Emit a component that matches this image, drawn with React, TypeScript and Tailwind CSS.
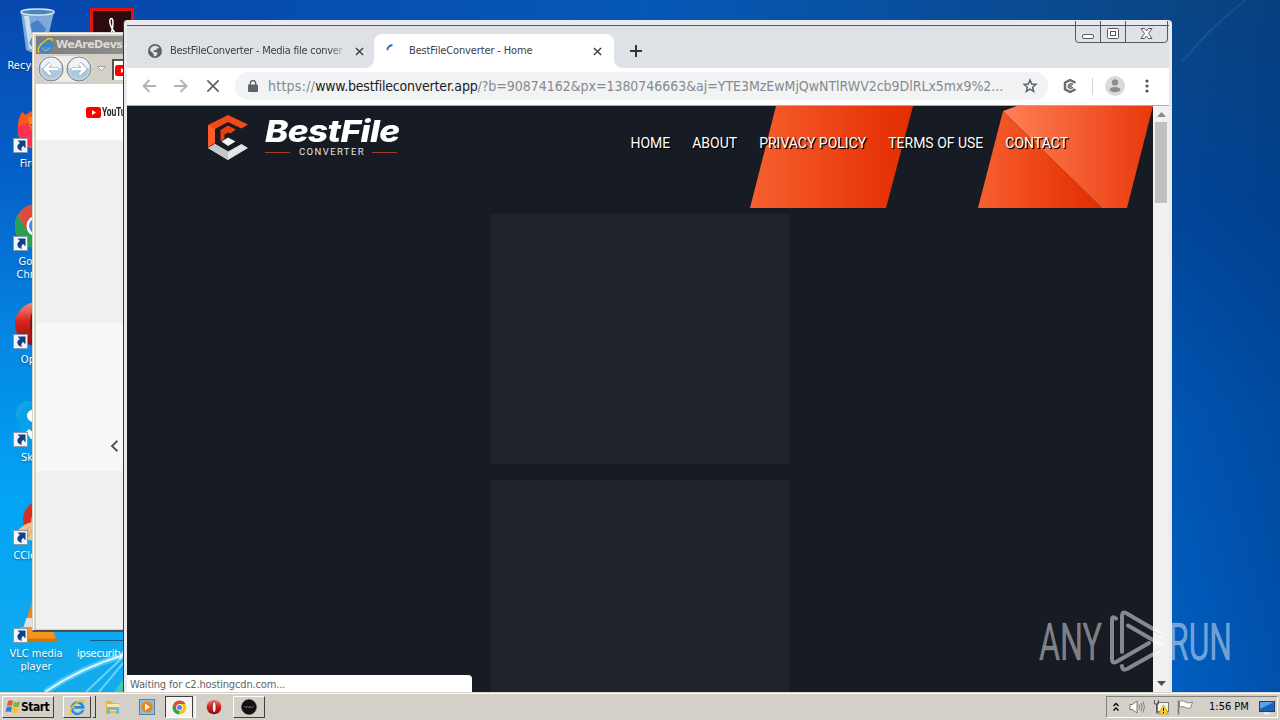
import type { ReactNode } from "react";
import { clsx } from "clsx";

const UI_FONT = "font-['DejaVu_Sans_Condensed','DejaVu_Sans',sans-serif]";

// Little blue "shortcut" arrow in the lower left corner of a desktop icon.
function ShortcutArrow() {
  return (
    <svg className="absolute -left-px top-[34px] h-[15px] w-[15px]" viewBox="0 0 15 15">
      <rect x=".5" y=".5" width="14" height="14" fill="#f2f6fa" stroke="#8b97a6" />
      <path d="M4.500 2.500h8v8L10.300 8C8.500 8.800 8 10.500 8.800 13 3.500 11.500 3 7 7 5z" fill="#153f80" />
    </svg>
  );
}

function RecycleBinIcon() {
  return (
    <svg className="h-12 w-12" viewBox="0 0 48 48">
      <path d="M9 6l5 38q9 5 19 0l9-38z" fill="#a9c8e4" fillOpacity=".75" />
      <path d="M12 10l5 33h5L17 10z" fill="#e3eff9" fillOpacity=".75" />
      <path d="M18 18l8-4 8 9-4 9 3 8-10 5-6-8 4-8z" fill="#2f71c4" fillOpacity=".7" />
      <ellipse cx="25.500" cy="6" rx="16.500" ry="3" fill="#4d85be" stroke="#d7e5f0" strokeWidth="1.500" />
    </svg>
  );
}

function FirefoxIcon() {
  return (
    <svg className="h-12 w-12" viewBox="0 0 48 48">
      <path d="M6 22q0-7 4-14l4 3 5-4 4 6 17 1v30H18C8 40 5 32 6 22z" fill="#fb5a1b" />
      <path d="M6 22c0 14 6 21 20 22V30c-8-1-10-6-7-12z" fill="#ff2e55" />
      <path d="M16 14c4-2 7-2 10 0v7l-8 2z" fill="#ff8a16" />
      <path d="M18 21l5-2v4z" fill="#6a1b4d" />
    </svg>
  );
}

function ChromeIcon({ className }: { className?: string }) {
  return (
    <svg className={className} viewBox="0 0 48 48">
      <circle cx="24" cy="24" r="22" fill="#fbc116" />
      <path d="M4.900 13A22 22 0 0 1 43.100 13H24L14 30z" fill="#dd4b3e" />
      <path d="M4.900 13l9.600 16.500L24 35l-2 11A22 22 0 0 1 4.900 13z" fill="#28a052" />
      <circle cx="24" cy="24" r="10.500" fill="#fff" />
      <circle cx="24" cy="24" r="8" fill="#4587f3" />
    </svg>
  );
}

function OperaIcon({ className }: { className?: string }) {
  return (
    <svg className={className} viewBox="0 0 48 48">
      <defs>
        <linearGradient id="opera" x2="0" y2="1">
          <stop offset="0" stopColor="#f58b84" />
          <stop offset=".45" stopColor="#d9231f" />
          <stop offset="1" stopColor="#8e0b0d" />
        </linearGradient>
      </defs>
      <ellipse cx="24" cy="24" rx="22" ry="22" fill="url(#opera)" />
      <ellipse cx="24" cy="24" rx="7" ry="17" fill="#7e1013" />
      <ellipse cx="24.500" cy="24" rx="4.500" ry="15" fill="#f6f2f2" />
    </svg>
  );
}

function SkypeIcon() {
  return (
    <svg className="h-12 w-12" viewBox="0 0 48 48">
      <circle cx="16" cy="15" r="12" fill="#10a5e5" />
      <circle cx="26" cy="24" r="20" fill="#08a0e6" />
      <path d="M24 11c-12 0-12 13 0 14v12l-7-6-3 3 5 7h9V11z" fill="#fff" />
    </svg>
  );
}

function CCleanerIcon() {
  return (
    <svg className="h-12 w-12" viewBox="0 0 48 48">
      <circle cx="31" cy="24" r="20" fill="#d7301f" />
      <circle cx="31" cy="25" r="12" fill="#7eb7dc" />
      <path d="M2 42c4-11 12-15 22-17v20z" fill="#efc18c" />
      <path d="M10 40l7-9M15 42l6-10" stroke="#d99e5d" />
    </svg>
  );
}

function VlcIcon() {
  return (
    <svg className="h-12 w-12" viewBox="0 0 48 48">
      <path d="M22 2h4l11 34H11z" fill="#f58412" />
      <path d="M14.500 24h19l3 9h-25z" fill="#e6e0da" />
      <path d="M8 33h32l4 12H3z" fill="#f7931e" />
      <path d="M3 44.500h42V47H3z" fill="#d97400" />
    </svg>
  );
}

const desktopIcons: { label: string; icon: ReactNode; top: string; shortcut: boolean }[] = [
  { label: "Recycle Bin", icon: <RecycleBinIcon />, top: "top-[6px]", shortcut: false },
  { label: "Firefox", icon: <FirefoxIcon />, top: "top-[104px]", shortcut: true },
  { label: "Google Chrome", icon: <ChromeIcon className="ml-px h-12 w-12" />, top: "top-[202px]", shortcut: true },
  { label: "Opera", icon: <OperaIcon className="ml-px h-12 w-12" />, top: "top-[300px]", shortcut: true },
  { label: "Skype", icon: <SkypeIcon />, top: "top-[398px]", shortcut: true },
  { label: "CCleaner", icon: <CCleanerIcon />, top: "top-[496px]", shortcut: true },
  { label: "VLC media player", icon: <VlcIcon />, top: "top-[594px]", shortcut: true },
];

function Wallpaper() {
  return (
    <svg className="absolute inset-0 h-[692px] w-[1280px]" viewBox="0 0 1280 692">
      <defs>
        <linearGradient id="sky" x2="0" y2="1">
          <stop offset="0" stopColor="#0748ad" />
          <stop offset=".25" stopColor="#0560c9" />
          <stop offset=".5" stopColor="#0488e4" />
          <stop offset=".72" stopColor="#03a4f5" />
          <stop offset="1" stopColor="#12acee" />
        </linearGradient>
        <linearGradient id="skyRight" x2="0" y2="1">
          <stop offset="0" stopColor="#0b4685" />
          <stop offset=".3" stopColor="#00469a" />
          <stop offset=".6" stopColor="#0056b4" />
          <stop offset="1" stopColor="#0060c4" />
        </linearGradient>
        <linearGradient id="topEdge">
          <stop offset="0" stopColor="#0748ad" />
          <stop offset=".5" stopColor="#0558b6" />
          <stop offset="1" stopColor="#0b4685" />
        </linearGradient>
        <linearGradient id="shade">
          <stop offset="0" stopColor="#003070" stopOpacity="0" />
          <stop offset="1" stopColor="#003070" stopOpacity=".3" />
        </linearGradient>
      </defs>
      <rect width="1280" height="692" fill="url(#sky)" />
      <rect x="120" width="1052" height="26" fill="url(#topEdge)" />
      <rect x="1160" width="120" height="692" fill="url(#skyRight)" />
      <rect x="1160" width="120" height="692" fill="url(#shade)" />
      <path d="M1182 62Q1212 25 1246 0" fill="none" stroke="#4d86bd" strokeOpacity=".22" strokeWidth="2" />
      <path d="M45 692Q80 668 124 655" fill="none" stroke="#8fe4ff" strokeOpacity=".45" strokeWidth="6" />
      <path d="M45 692Q80 668 124 655" fill="none" stroke="#d8f8ff" strokeWidth="2" />
      <path d="M86 692L124 656M99 692L124 662" fill="none" stroke="#8fe4ff" strokeOpacity=".7" strokeWidth="2" />
      <path d="M114 692l10-14v14z" fill="#52d79b" fillOpacity=".7" />
    </svg>
  );
}

function DesktopIcons() {
  return (
    <>
      {desktopIcons.map(({ label, icon, top, shortcut }) => (
        <div key={label} className={clsx("absolute left-0 flex w-[72px] flex-col items-center gap-[5px]", top)}>
          <div className="relative h-12 w-11">
            <div className="-ml-0.5 h-12 w-12">{icon}</div>
            {shortcut && <ShortcutArrow />}
          </div>
          <span className="w-[64px] text-center text-[11px] leading-[13px] text-white [text-shadow:0_1px_2px_#0006]">
            {label}
          </span>
        </div>
      ))}
      <div className="absolute left-[90px] top-2 flex h-12 w-11 justify-center border-[3px] border-[#e1150c] bg-[#2c0a0e]">
        <svg className="mt-1 h-8 w-6" viewBox="0 0 24 32">
          <path d="M8 24C12 18 13 13 13 8c0-6-4-6-3 0 1 5 4 9 7 12" fill="none" stroke="#fff" strokeWidth="1.500" />
        </svg>
      </div>
      <div className="absolute left-[77px] top-[640px] pt-[7px] text-[11px] leading-[13px] tracking-[-0.2px] text-white">ipsecurity</div>
      <div className="absolute left-[90px] top-[640px] h-px w-11 bg-[#0d5d8b]" />
    </>
  );
}

function IeLogo({ className }: { className?: string }) {
  return (
    <svg className={className} viewBox="0 0 18 18">
      <path d="M14.800 11.500A6 6 0 1 1 15 8.800H5.500" fill="none" stroke="#2a8bd9" strokeWidth="2.800" />
      <path d="M13.800 11.300A5 5 0 0 1 5 12" fill="none" stroke="#7cc8f5" strokeWidth="1" />
      <path d="M2.500 16.500C-1 15 3 7 9 3.500c4-2.500 8-2.500 7 .7" fill="none" stroke="#f3c21c" strokeWidth="1.600" />
    </svg>
  );
}

function NavOrb({ back }: { back?: boolean }) {
  return (
    <svg className={clsx("h-[26px] w-[26px]", back && "-scale-x-100")} viewBox="0 0 26 26">
      <circle cx="13" cy="13" r="12" fill="#c3cfdb" stroke="#75818c" />
      <path d="M2.500 12a10.500 10.500 0 0 1 21 0z" fill="#eef3f8" />
      <path d="M3.500 15a10 10 0 0 0 19 0z" fill="#a6cbe4" />
      <path d="M6 13h13M13.500 7.500L19 13l-5.500 5.500" fill="none" stroke="#7d97ae" strokeWidth="4.200" />
      <path d="M6 13h13M13.500 7.500L19 13l-5.500 5.500" fill="none" stroke="#fff" strokeWidth="3" />
    </svg>
  );
}

function YouTubeMark({ className }: { className?: string }) {
  return (
    <svg className={className} viewBox="0 0 15 11">
      <rect width="15" height="11" rx="2.600" fill="#f00" />
      <path d="M6 3l4 2.500L6 8z" fill="#fff" />
    </svg>
  );
}

function ExplorerWindow() {
  return (
    <div className="absolute left-8 top-8 flex h-[600px] w-[180px] flex-col border-b-2 border-l border-t border-b-[#4f4f4f] border-l-[#d4d0c8] border-t-[#d4d0c8] bg-[#d4d0c8] pb-px pl-[3px] pt-[3px] shadow-[inset_1px_1px_0_#fff]">
      <div className="flex h-[18px] items-center bg-linear-to-r from-[#7d7d7d] to-[#a0a0a0] pl-px text-[#dedbd4]">
        <IeLogo className="h-[17px] w-[17px]" />
        <span className="ml-0.5 font-['DejaVu_Sans',sans-serif] text-[11px] font-bold tracking-[-0.5px]">WeAreDevs</span>
      </div>
      <div className="flex h-[30px] items-center pl-[2px]">
        <div className="flex gap-[2px] rounded-full bg-[#eeece6]">
          <NavOrb back />
          <NavOrb />
        </div>
        <svg className="ml-[5px] h-[6px] w-[9px]" viewBox="0 0 9 6">
          <path d="M.5.5h8l-4 4z" fill="#f7f6f3" stroke="#aaa69d" />
        </svg>
        <div className="ml-[6px] flex h-[21px] w-[60px] items-center border-l-2 border-t-2 border-[#58554f] bg-white pl-px">
          <YouTubeMark className="h-[11px] w-[15px]" />
        </div>
      </div>
      <div className="flex flex-1 flex-col bg-[#f0f0f0]">
        <div className="flex h-14 items-center bg-white pl-[50px]">
          <YouTubeMark className="h-[11px] w-[15px]" />
          <span className="ml-px origin-left scale-x-[.68] font-[Roboto,sans-serif] text-[12.500px] font-bold tracking-[-0.3px] text-[#282828]">
            YouTube
          </span>
        </div>
        <div className="mt-[183px] flex h-[148px] bg-[#f8f8f8] pl-[73px] pt-[117px]">
          <svg className="h-3 w-3" viewBox="0 0 12 12">
            <path d="M8.500.8L3 6l5.500 5.200" fill="none" stroke="#555" strokeWidth="1.900" />
          </svg>
        </div>
      </div>
    </div>
  );
}

function Cross({ className, thin }: { className?: string; thin?: boolean }) {
  return (
    <svg className={className} viewBox="0 0 10 10" fill="none" stroke="currentColor">
      <path d="M1 1l8 8M9 1L1 9" strokeWidth={thin ? 1.2 : 1.6} />
    </svg>
  );
}

function TabStrip() {
  return (
    <div className="flex h-[42px] shrink-0 items-start bg-[#dee1e6] pt-2 text-[11px] text-[#3c4043]">
      <div className="flex h-[34px] w-[247px] items-center pl-[21px]">
        <svg className="h-[14px] w-[14px]" viewBox="0 0 14 14">
          <circle cx="7" cy="7" r="7" fill="#5f6368" />
          <path d="M7 1.800c2 0 3.500 1 4.300 2.200L9 4.500 8.300 6H6.500L5 7.500l4 .7.500 1.500L8 12l-2 .2-.5-2.400L2 6.500C2.200 4 4 2 7 1.800z" fill="#dee1e6" />
        </svg>
        <span className="ml-2 w-[177px] overflow-hidden whitespace-nowrap pt-px tracking-[-0.27px] [mask-image:linear-gradient(90deg,#000_90%,transparent)]">
          BestFileConverter - Media file conver
        </span>
        <Cross className="ml-[8px] h-[9px] w-[9px] shrink-0" />
      </div>
      <div className="relative flex h-[34px] w-[240px] items-center rounded-t-lg bg-white pl-[12px]">
        <span className="absolute -left-2 bottom-0 h-2 w-2 bg-[radial-gradient(circle_at_0_0,transparent_7.500px,white_8px)]" />
        <span className="absolute -right-2 bottom-0 h-2 w-2 bg-[radial-gradient(circle_at_100%_0,transparent_7.500px,white_8px)]" />
        <svg className="h-[14px] w-[14px]" viewBox="0 0 14 14">
          <path d="M1.200 6.200Q2.200 1.500 6.500 1" fill="none" stroke="#3367d6" strokeWidth="1.800" />
        </svg>
        <span className="ml-[9px] w-[177px] pt-px tracking-[-0.14px]">BestFileConverter - Home</span>
        <Cross className="ml-[7px] h-[9px] w-[9px]" />
      </div>
      <svg className="ml-4 mt-[11px] h-3 w-3" viewBox="0 0 12 12">
        <path d="M6 0v12M0 6h12" stroke="#303438" strokeWidth="2" />
      </svg>
    </div>
  );
}

function AddressBar() {
  return (
    <div className="flex h-[38px] shrink-0 items-center border-b border-[#a9abae] bg-white pb-px text-[#5f6368]">
      <svg className="ml-[15px] h-[14px] w-[14px]" viewBox="0 0 14 14" fill="none" stroke="#b1b3b6" strokeWidth="1.900">
        <path d="M14 7H1.500M7.500 1l-6 6 6 6" />
      </svg>
      <svg className="ml-[18px] h-[14px] w-[14px]" viewBox="0 0 14 14" fill="none" stroke="#b1b3b6" strokeWidth="1.900">
        <path d="M0 7h12.500M6.500 1l6 6-6 6" />
      </svg>
      <Cross thin className="ml-[18px] h-[14px] w-[14px]" />
      <div className="ml-[15px] flex h-7 w-[813px] items-center rounded-full bg-[#f1f3f4] pl-[13px] pr-[10px]">
        <svg className="h-3 w-[10px]" viewBox="0 0 10 12">
          <rect y="4.500" width="10" height="7.500" rx="1" fill="#5f6368" />
          <path d="M2.300 5V3.300a2.700 2.700 0 0 1 5.400 0V5" fill="none" stroke="#5f6368" strokeWidth="1.400" />
        </svg>
        <span className="ml-[10px] w-[740px] whitespace-nowrap text-[14px] tracking-[-0.03px] text-[#868a8e]">
          <span className="tracking-[0.25px]">https://</span>
          <span className="tracking-[-0.2px] text-[#202124]">www.bestfileconverter.app</span>
          /?b=90874162&amp;px=1380746663&amp;aj=YTE3MzEwMjQwNTlRWV2cb9DlRLx5mx9%2...
        </span>
        <svg className="ml-auto h-4 w-4" viewBox="0 0 16 16">
          <path d="M8 2l1.700 4 4.300.4-3.300 2.900 1 4.200L8 11.200l-3.700 2.300 1-4.200L2 6.400 6.300 6z" fill="none" stroke="#5f6368" strokeWidth="1.500" />
        </svg>
      </div>
      <svg className="ml-[15px] h-[14px] w-[14px]" viewBox="0 0 14 14" fill="none" stroke="#686b70">
        <path d="M12.500 3.800L7 1 2 3.800v6.400L7 13l5.500-2.800" strokeWidth="2.400" />
        <path d="M10 5.500L7.500 4.500 5.500 6v2.500l2 1L10 8.500M6 7h3" strokeWidth="1.500" />
      </svg>
      <div className="ml-[15px] h-[17px] w-px bg-[#d0d3d7]" />
      <svg className="ml-[12px] h-5 w-5" viewBox="0 0 20 20">
        <circle cx="10" cy="10" r="10" fill="#dadada" />
        <circle cx="10" cy="6.500" r="3.200" fill="#8d8d8d" />
        <path d="M4.500 14c0-4 11-4 11 0-2 3-9 3-11 0z" fill="#8d8d8d" />
      </svg>
      <svg className="ml-[20px] h-[14px] w-1" viewBox="0 0 4 14" fill="#4f5357">
        <circle cx="2" cy="2" r="1.600" />
        <circle cx="2" cy="7" r="1.600" />
        <circle cx="2" cy="12" r="1.600" />
      </svg>
    </div>
  );
}

function BestFileLogo() {
  return (
    <div className="flex items-start">
      <svg className="h-[47px] w-[41px]" viewBox="0 0 41 47">
        <path d="M0 11L20 1l20 9.500-6.500 4L20 8 7 15v14l-7 4z" fill="#f04a1c" />
        <path d="M0 11l7 4v14l-7 4z" fill="#ff5a2c" />
        <path d="M12.500 16l7.500-4.500L28 15.500l-5.500 4-2.500-1-3.500 2v4.500l-4 2z" fill="#e8400f" />
        <path d="M0 34l7-4 13 7.500L33.500 30l6.500 4-20 12z" fill="#e4e5e6" />
        <path d="M0 34l7-4 13 7.500V46z" fill="#c6c7ca" />
        <path d="M13.500 27.500l6.500-4 7.500 4-7.500 4.500z" fill="#f3f3f3" />
      </svg>
      <div className="ml-[16px] flex flex-col">
        <span className="h-[32px] w-[135px] origin-left scale-x-[1.170] whitespace-nowrap font-[Inter,sans-serif] text-[30px] font-extrabold italic leading-[35px] tracking-[-0.5px] text-white">
          BestFile
        </span>
        <div className="flex w-[132px] items-center justify-between">
          <span className="h-px w-[25px] bg-[#a33c24]" />
          <span className="-mr-[2px] font-[Roboto,sans-serif] text-[9.500px] leading-[12px] tracking-[1.400px] text-[#e6e6e6]">CONVERTER</span>
          <span className="h-px w-[25px] bg-[#a33c24]" />
        </div>
      </div>
    </div>
  );
}

// Slanted orange plates behind the navigation.
function HeaderArt() {
  return (
    <svg className="absolute right-0 top-0 h-[102px] w-[404px]" viewBox="749 106 404 102">
      <defs>
        <linearGradient id="plate">
          <stop offset="0" stopColor="#f7602f" />
          <stop offset=".8" stopColor="#e73509" />
          <stop offset="1" stopColor="#e22f02" />
        </linearGradient>
        <linearGradient id="plateLight">
          <stop offset="0" stopColor="#ff8156" />
          <stop offset="1" stopColor="#e8380c" />
        </linearGradient>
      </defs>
      <path d="M776 106h137l-27 102H750z" fill="url(#plate)" />
      <path d="M1003 111l99 97H978z" fill="url(#plate)" />
      <path d="M1003 111l14-5h136l-26 102h-25z" fill="url(#plateLight)" />
    </svg>
  );
}

const navItems = ["HOME", "ABOUT", "PRIVACY POLICY", "TERMS OF USE", "CONTACT"];

function ConverterPage() {
  return (
    <div className="relative h-full w-[1026px] overflow-hidden bg-[#171b24]">
      <header className="relative h-[102px]">
        <HeaderArt />
        <div className="relative flex justify-between pl-[81px] pr-[85px] pt-[8px]">
          <BestFileLogo />
          <nav className="mt-[19px] flex gap-[22px] whitespace-nowrap font-[Roboto,sans-serif] text-[14px] leading-5 text-white [text-shadow:1px_1px_1px_#000,1px_1px_0_#000]">
            {navItems.map((item) => (
              <a key={item}>{item}</a>
            ))}
          </nav>
        </div>
      </header>
      <main className="mt-[6px] flex flex-col items-center gap-4">
        <div className="h-[250px] w-[300px] bg-[#1f232b]" />
        <div className="h-[250px] w-[300px] bg-[#1f232b]" />
      </main>
      <div className="absolute bottom-0 left-0 h-[17px] w-[345px] rounded-tr bg-white pl-[3px] text-[11px] leading-[19px] tracking-[-0.160px] text-[#5f6368]">
        Waiting for c2.hostingcdn.com...
      </div>
    </div>
  );
}

function WindowControls() {
  return (
    <svg className="absolute right-[3px] top-[1px] h-[22px] w-[94px]" viewBox="0 0 94 22" fill="none" stroke="#55585e">
      <path d="M.5 0v18q0 3.500 3 3.500h86q3 0 3-3.500V0M25.500 0v21M50.500 0v21" />
      <rect x="7.500" y="13.500" width="11" height="4" rx="1.500" fill="#fff" />
      <rect x="32.500" y="7.500" width="11" height="10" rx="1" fill="#fff" />
      <rect x="35.500" y="10.500" width="5" height="4" />
      <path d="M66 7.500h3.500l2 2.500 2-2.500H77l-3.500 5 3.500 5h-3.500l-2-2.500-2 2.500H66l3.500-5z" fill="#fff" />
    </svg>
  );
}

function ChromeWindow() {
  return (
    <div className="absolute left-[123px] top-5 flex h-[672px] w-[1049px] flex-col rounded-t border-l border-[#32363d] bg-[#e9eaed] pl-[3px] pr-[3px]">
      <div className="h-[6px] shrink-0 border-b border-[#55585c]" />
      <TabStrip />
      <AddressBar />
      <div className="flex min-h-0 flex-1">
        <ConverterPage />
        <div className="flex w-4 flex-col items-center bg-[#f1f1f1] py-[6px]">
          <svg className="h-[5px] w-[9px]" viewBox="0 0 9 5">
            <path d="M0 5l4.500-5L9 5z" fill="#8c8c8c" />
          </svg>
          <div className="mt-[5px] h-[81px] w-3 bg-[#c1c1c1]" />
          <svg className="mt-auto h-[5px] w-[9px]" viewBox="0 0 9 5">
            <path d="M0 0l4.500 5L9 0z" fill="#505050" />
          </svg>
        </div>
      </div>
      <WindowControls />
    </div>
  );
}

function Watermark() {
  return (
    <svg className="absolute left-[1026px] top-[600px] h-[80px] w-[220px] font-[Roboto,sans-serif]" viewBox="1026 600 220 80">
      <g fill="#fff" fillOpacity=".45" stroke="#fff" strokeOpacity=".2" strokeWidth=".7" fontSize="52" fontWeight="400">
        <text x="1039" y="659.500" textLength="63" lengthAdjust="spacingAndGlyphs">ANY</text>
        <text x="1169" y="659.500" textLength="63" lengthAdjust="spacingAndGlyphs">RUN</text>
      </g>
      <g opacity=".48" fill="none" stroke="#fff" strokeWidth="4" strokeLinejoin="round" strokeLinecap="round">
        <path d="M1116 618.500q-4-3-4 1.500v39q0 5 4 3l33-19" />
        <path d="M1122 652v-36q0-5 4-3l35 20.500q2 2 0 3" />
        <path d="M1128 625.500l31 18" />
        <path d="M1122 666q0 5 5 3l32-18q4-3 1-8" />
      </g>
      {/* soft edge where the mark crosses the light scrollbar */}
      <path d="M1154 631l8 5M1154 653l8-6" stroke="#c9c9c9" strokeOpacity=".6" strokeWidth="1" />
    </svg>
  );
}

const raised = "border border-b-[#404040] border-l-white border-r-[#404040] border-t-white";

function Taskbar() {
  return (
    <div className="flex h-7 items-center border-t border-[#d4d0c8] bg-[#d4d0c8] pl-[2px] pr-[2px] pt-px text-black shadow-[inset_0_1px_0_#fff]">
      <button className={clsx("flex h-[22px] w-[52px] items-center pl-[2px]", raised)}>
        <svg className="h-4 w-4 shrink-0" viewBox="0 0 16 16">
          <path d="M3 2q3-1.500 5 0L7 7Q4.500 6 2 7z" fill="#e9572b" />
          <path d="M9 2.500q2 1.500 6 0L14 7.500q-3 1.500-6 0z" fill="#7ab648" />
          <path d="M1.800 8Q4 7 7 8l-1 5q-3-1-5.500 0z" fill="#2f7ed3" />
          <path d="M8 8.500q3 1.500 6 0l-1 5q-3 1.500-6 0z" fill="#fcc129" />
        </svg>
        <span className="text-[12px] font-bold tracking-[-0.5px]">Start</span>
      </button>
      <div className="ml-[9px] flex h-[22px] w-[33px]">
        <div className={clsx("flex w-[28px] items-center justify-center", raised)}>
          <IeLogo className="h-[17px] w-[17px]" />
        </div>
        <div className="ml-[2px] w-[3px] border-b border-r border-[#404040]" />
      </div>
      <svg className="ml-[9px] h-4 w-4" viewBox="0 0 16 16">
        <path d="M1 2h6l1 2h6v10H1z" fill="#e2b84c" />
        <path d="M2 5h12v7H2z" fill="#f9e9a4" />
        <path d="M2 8h12v7h-3v-4H5v4H2z" fill="#70b7dc" />
      </svg>
      <svg className="ml-[18px] h-4 w-4" viewBox="0 0 16 16">
        <rect x=".5" y=".5" width="15" height="15" fill="#92bede" stroke="#4b83b2" />
        <circle cx="8" cy="8" r="5.800" fill="#ed8416" />
        <path d="M6 4.500l5 3.500-5 3.500z" fill="#fff" />
      </svg>
      <div className="ml-[10px] flex h-[22px] w-[31px]">
        <div className="flex w-[28px] items-center justify-center border border-b-white border-l-[#404040] border-r-[#404040] border-t-[#404040] bg-[#f4f3f1]">
          <ChromeIcon className="h-[15px] w-[15px]" />
        </div>
        <div className="w-[3px] border-r border-white bg-[#efeeeb]" />
      </div>
      <OperaIcon className="ml-[10px] h-4 w-4" />
      <div className={clsx("ml-[11px] flex h-[22px] w-[32px] items-center justify-center", raised)}>
        <svg className="h-4 w-4" viewBox="0 0 16 16">
          <circle cx="8" cy="8" r="7.500" fill="#111" stroke="#333" strokeDasharray="1 1" />
          <path d="M3 7l2 2 1-2 2 2 1-2 1 2 3-2" fill="none" stroke="#777" strokeWidth=".8" />
        </svg>
      </div>
      <div className="ml-auto flex h-[22px] w-[172px] items-center border border-b-white border-l-[#808080] border-r-white border-t-[#808080]">
        <svg className="ml-[6px] h-[10px] w-[6px]" viewBox="0 0 6 10" fill="none" stroke="#000" strokeWidth="1.300">
          <path d="M.5 4L3 1.500 5.500 4M.5 8.500L3 6l2.500 2.500" />
        </svg>
        <svg className="ml-[10px] h-4 w-4" viewBox="0 0 16 16" stroke="#777">
          <path d="M1 5.500h2.500L8 2v12l-4.500-3.500H1z" fill="#fff" />
          <path d="M10 5.500q1.500 2.500 0 5M12 4q2.500 4 0 8M14 2.500q3 5.500 0 11" fill="none" strokeWidth=".9" />
        </svg>
        <svg className="ml-[8px] h-4 w-4" viewBox="0 0 16 16">
          <rect x="4.500" y="3.500" width="11" height="9" fill="#f4f4f4" stroke="#777" />
          <path d="M1.500 1v4h4V1M3.500 5v9H7" fill="none" stroke="#555" />
          <path d="M10.500 6l5 9h-10z" fill="#ffd50d" stroke="#ad8300" strokeWidth=".6" />
          <path d="M10.500 9v3M10.500 13v1" stroke="#000" />
        </svg>
        <svg className="ml-[8px] h-4 w-4" viewBox="0 0 16 16">
          <path d="M1.500 1.500v14" stroke="#777" strokeWidth="1.500" />
          <path d="M2.500 2q3-1 6 1t7 0l-2 6q-3 1-5-.5t-6-.5z" fill="#fff" stroke="#888" />
        </svg>
        <span className="ml-[16px] whitespace-nowrap pt-px text-[11px]">1:56 PM</span>
        <svg className="ml-auto mr-[2px] h-[15px] w-4" viewBox="0 0 16 15">
          <rect x=".5" y="1.500" width="15" height="10" fill="#1763bd" stroke="#26415e" />
          <path d="M1 2h14L1 9z" fill="#5f9fe6" />
          <path d="M5 13.500h6" stroke="#efefef" strokeWidth="2" />
        </svg>
      </div>
    </div>
  );
}

export default function App() {
  return (
    <div className={clsx("flex h-[720px] w-[1280px] flex-col overflow-hidden", UI_FONT)}>
      <div className="relative h-[692px] overflow-hidden">
        <Wallpaper />
        <DesktopIcons />
        <ExplorerWindow />
        <ChromeWindow />
        <Watermark />
      </div>
      <Taskbar />
    </div>
  );
}
